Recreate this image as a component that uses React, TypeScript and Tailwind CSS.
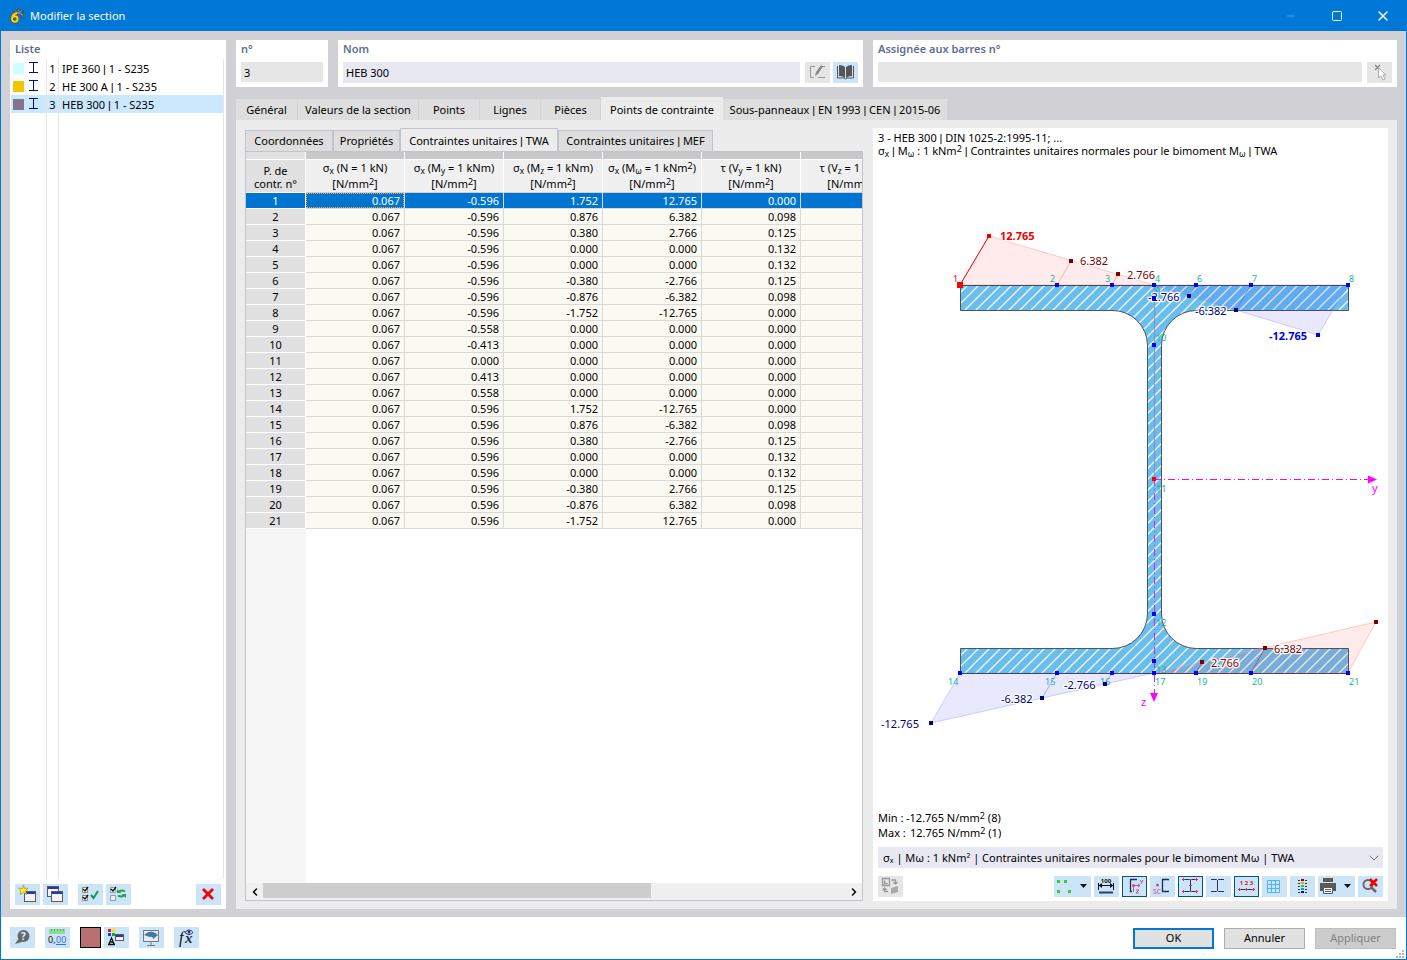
import { Fragment, useState, type ReactNode } from "react";
import { ChevronDown, ChevronLeft, ChevronRight, Minus, Square, X } from "lucide-react";
import clsx from "clsx";

const sections = [
  { id: 1, name: "IPE 360 | 1 - S235", color: "bg-[#ccffff]" },
  { id: 2, name: "HE 300 A | 1 - S235", color: "bg-[#f5c400]" },
  { id: 3, name: "HEB 300 | 1 - S235", color: "bg-[#85738f]" },
];

const mainTabs = [
  { label: "Général", width: "w-[62px]" },
  { label: "Valeurs de la section", width: "w-[121px]" },
  { label: "Points", width: "w-[61px]" },
  { label: "Lignes", width: "w-[61px]" },
  { label: "Pièces", width: "w-[60px]" },
  { label: "Points de contrainte", width: "w-[122px]" },
  { label: "Sous-panneaux | EN 1993 | CEN | 2015-06", width: "w-[225px]" },
];

const subTabs = [
  { label: "Coordonnées", width: "w-[88px]" },
  { label: "Propriétés", width: "w-[67px]" },
  { label: "Contraintes unitaires | TWA", width: "w-[158px]" },
  { label: "Contraintes unitaires | MEF", width: "w-[155px]" },
];

const columns: { symbol: string; axis: string; load: string; loadAxis: string; unit: ReactNode }[] = [
  { symbol: "σ", axis: "x", load: "N", loadAxis: "", unit: "kN" },
  { symbol: "σ", axis: "x", load: "M", loadAxis: "y", unit: "kNm" },
  { symbol: "σ", axis: "x", load: "M", loadAxis: "z", unit: "kNm" },
  { symbol: "σ", axis: "x", load: "M", loadAxis: "ω", unit: <>kNm<sup>2</sup></> },
  { symbol: "τ", axis: "", load: "V", loadAxis: "y", unit: "kN" },
  { symbol: "τ", axis: "", load: "V", loadAxis: "z", unit: "kN" },
];

const rows = [
  ["0.067", "-0.596", "1.752", "12.765", "0.000"],
  ["0.067", "-0.596", "0.876", "6.382", "0.098"],
  ["0.067", "-0.596", "0.380", "2.766", "0.125"],
  ["0.067", "-0.596", "0.000", "0.000", "0.132"],
  ["0.067", "-0.596", "0.000", "0.000", "0.132"],
  ["0.067", "-0.596", "-0.380", "-2.766", "0.125"],
  ["0.067", "-0.596", "-0.876", "-6.382", "0.098"],
  ["0.067", "-0.596", "-1.752", "-12.765", "0.000"],
  ["0.067", "-0.558", "0.000", "0.000", "0.000"],
  ["0.067", "-0.413", "0.000", "0.000", "0.000"],
  ["0.067", "0.000", "0.000", "0.000", "0.000"],
  ["0.067", "0.413", "0.000", "0.000", "0.000"],
  ["0.067", "0.558", "0.000", "0.000", "0.000"],
  ["0.067", "0.596", "1.752", "-12.765", "0.000"],
  ["0.067", "0.596", "0.876", "-6.382", "0.098"],
  ["0.067", "0.596", "0.380", "-2.766", "0.125"],
  ["0.067", "0.596", "0.000", "0.000", "0.132"],
  ["0.067", "0.596", "0.000", "0.000", "0.132"],
  ["0.067", "0.596", "-0.380", "2.766", "0.125"],
  ["0.067", "0.596", "-0.876", "6.382", "0.098"],
  ["0.067", "0.596", "-1.752", "12.765", "0.000"],
];

// Noto's bar is very wide, Liberation's sits closer to the words
function Bar() {
  return <span className="font-['Liberation_Sans',sans-serif] leading-0">|</span>;
}

function Piped({ text }: { text: string }) {
  return (
    <>
      {text.split("|").map((part, i) => (
        <Fragment key={i}>
          {i > 0 && <Bar />}
          {part}
        </Fragment>
      ))}
    </>
  );
}

function IconButton({
  label,
  children,
  tone = "bg-[#cce4f7]",
  width = "w-[25px]",
  active = false,
  disabled = false,
}: {
  label: string;
  children: ReactNode;
  tone?: string;
  width?: string;
  active?: boolean;
  disabled?: boolean;
}) {
  return (
    <button
      type="button"
      aria-label={label}
      disabled={disabled}
      className={clsx(
        "flex h-[21px] shrink-0 items-center justify-center",
        width,
        disabled ? "bg-[#e6e6e6]" : tone,
        active && "outline outline-1 -outline-offset-1 outline-[#005499]"
      )}
    >
      {children}
    </button>
  );
}

function Glyph({ children, wide = false }: { children: ReactNode; wide?: boolean }) {
  return (
    <svg
      viewBox={wide ? "0 0 37 21" : "0 0 25 21"}
      className={clsx("h-[21px] shrink-0", wide ? "w-[37px]" : "w-[25px]")}
      fill="none"
      aria-hidden="true"
    >
      {children}
    </svg>
  );
}

function AppLogo() {
  return (
    <svg viewBox="0 0 16 16" className="h-4 w-4" aria-hidden="true">
      <path d="M4 4 8 0.500l5 1L16 5l-2.500 6L9 6z" fill="#3b5672" />
      <path d="M6 3l8 4M9 1.500l5 7M13 2 9 6" stroke="#8aa6c0" strokeWidth="0.700" />
      <path d="M8.500 5C5 5.500 3 8 3 11a2.800 2.800 0 1 0 2.800-2.800Q4 8.200 3.200 10" fill="none" stroke="#6b5200" strokeWidth="3.400" />
      <path d="M8.500 5C5 5.500 3 8 3 11a2.800 2.800 0 1 0 2.800-2.800Q4 8.200 3.200 10" fill="none" stroke="#ffd21f" strokeWidth="2" />
    </svg>
  );
}

function BeamIcon() {
  return (
    <svg viewBox="0 0 11 12" className="h-3 w-[11px]" aria-hidden="true">
      <path d="M1 0.500h9M1 10.500h9M5.500 0.500v10" stroke="#00107f" fill="none" />
    </svg>
  );
}

function WindowShape({ x, y, w, h }: { x: number; y: number; w: number; h: number }) {
  return (
    <g>
      <rect x={x + 0.5} y={y + 0.5} width={w - 1} height={h - 1} fill="#f4f4f4" stroke="#5a5a5a" />
      <rect x={x + 1} y={y + 1} width={w - 2} height="2" fill="#2136c4" />
    </g>
  );
}

function SectionList() {
  const [selected, setSelected] = useState(3);
  return (
    <aside className="flex w-[216px] shrink-0 flex-col bg-white px-px pb-1">
      <h2 className="h-[19px] px-1 text-[11px] leading-[18px] font-semibold text-[#5f6d8f]">Liste</h2>
      <ul className="mr-px">
        {sections.map((s) => (
          <li key={s.id}>
            <button
              type="button"
              onClick={() => setSelected(s.id)}
              className={clsx(
                "flex h-[18px] w-full items-stretch border-r border-[#e5e5e5] text-left leading-5",
                s.id === selected && "bg-[#cce8ff]"
              )}
            >
              <span className="flex w-9 items-center gap-1 border-r border-[#e5e5e5] pl-[2px]">
                <span className={clsx("h-[11px] w-[11px]", s.color)} />
                <BeamIcon />
              </span>
              <span className="w-3 border-r border-[#e5e5e5] text-center">{s.id}</span>
              <span className="flex-1 pl-[3px]">
                <Piped text={s.name} />
              </span>
            </button>
          </li>
        ))}
      </ul>
      <div className="mr-px mb-[5px] flex flex-1 border-r border-[#e5e5e5]">
        <div className="w-9 border-r border-[#e5e5e5]" />
        <div className="w-3 border-r border-[#e5e5e5]" />
      </div>
      <div className="flex px-1">
        <div className="flex gap-[3px]">
          <IconButton label="Nouvelle section">
            <Glyph>
              <WindowShape x={9} y={7} w={12} h={11} />
              <path d="m8.500 1 1 3.500L13 4l-2.500 3 1.500 3.500-3.500-2-3.500 2L6 7 3.500 4l4 .5z" fill="#ffe92e" stroke="#9a8600" strokeWidth="0.600" />
            </Glyph>
          </IconButton>
          <IconButton label="Copier la section">
            <Glyph>
              <WindowShape x={4} y={2} w={12} h={11} />
              <WindowShape x={8} y={7} w={12} h={11} />
            </Glyph>
          </IconButton>
        </div>
        <div className="ml-[10px] flex gap-[3px]">
          <IconButton label="Tout sélectionner">
            <Glyph>
              <path d="M4.500 3.500h5v5h-5zM4.500 11.500h5v5h-5z" stroke="#888" fill="#fff" />
              <path d="m5 5 2 2 3-4M5 13l2 2 3-4" stroke="#111" strokeWidth="1.300" />
              <path d="m13 11 2.500 3L20 7" stroke="#0e9f4a" strokeWidth="2" />
            </Glyph>
          </IconButton>
          <IconButton label="Inverser la sélection">
            <Glyph>
              <path d="M4.500 3.500h5v5h-5zM4.500 11.500h5v5h-5z" stroke="#999" fill="#e5f0fa" />
              <path d="m5 5 2 2 3-4" stroke="#111" strokeWidth="1.300" />
              <path d="M19 7.500q-3-2-6 0M12 11.500q3 2 6 0" stroke="#20a050" strokeWidth="1.800" />
              <path d="M11 5v4h4.500zM20 14v-4h-4.500z" fill="#20a050" />
            </Glyph>
          </IconButton>
        </div>
        <div className="ml-auto flex">
          <IconButton label="Supprimer">
            <Glyph>
              <path d="m7 5 10 10M17 5 7 15" stroke="#f40000" strokeWidth="2.800" />
            </Glyph>
          </IconButton>
        </div>
      </div>
    </aside>
  );
}

function Field({ title, id, children, className }: { title: string; id: string; children: ReactNode; className?: string }) {
  return (
    <div className={clsx("h-[47px] bg-white px-[5px]", className)}>
      <label htmlFor={id} className="block h-[22px] text-[11px] leading-[18px] font-semibold text-[#5f6d8f]">
        {title}
      </label>
      <div className="flex">{children}</div>
    </div>
  );
}

function StressTable() {
  const cell = "border-r border-b border-[#d9d9d9] p-0";
  return (
    <div className="flex min-h-0 flex-1 flex-col border border-[#c3c3cf] bg-white">
      <div className="overflow-hidden">
        <table className="w-[654px] table-fixed border-separate border-spacing-0 leading-[15px]">
          <colgroup>
            <col className="w-[60px]" />
            {columns.map((_, i) => (
              <col key={i} className="w-[99px]" />
            ))}
          </colgroup>
          <thead>
            <tr className="h-2">
              <td className="border-r border-b border-white bg-[#e1e1e1] p-0" />
              {columns.map((_, i) => (
                <td key={i} className="border-r border-b border-white bg-[#c8c8c8] p-0" />
              ))}
            </tr>
            <tr className="h-8">
              <th className="border-r border-b border-white bg-[#e1e1e1] p-0 pt-px leading-[13px] font-normal">
                P. de
                <br />
                contr. n°
              </th>
              {columns.map((c, i) => (
                <th key={i} className="border-r border-b border-[#d0d0d0] border-r-white bg-[#f0f0f0] p-0 leading-4 font-normal whitespace-nowrap">
                  {c.symbol}
                  <sub>{c.axis}</sub> ({c.load}
                  <sub>{c.loadAxis}</sub> = 1 {c.unit})
                  <br />
                  [N/mm<sup>2</sup>]
                </th>
              ))}
            </tr>
          </thead>
          <tbody>
            {rows.map((values, r) => (
              <tr key={r} className={clsx("h-4", r === 0 ? "bg-[#0074d1] text-white" : "bg-[#fafaf3]")}>
                <th scope="row" className={clsx("border-r border-b border-white p-0 font-normal", r > 0 && "bg-[#e1e1e1]")}>
                  {r + 1}
                </th>
                {values.map((v, i) => (
                  <td key={i} className={clsx(cell, "text-right")}>
                    <span
                      className={clsx(
                        "block pr-1",
                        r === 0 && i === 0 && "outline-1 -outline-offset-1 outline-dotted outline-[#ff9a4a]"
                      )}
                    >
                      {v}
                    </span>
                  </td>
                ))}
                <td className={cell} />
              </tr>
            ))}
          </tbody>
        </table>
      </div>
      <div className="flex-1">
        <div className="h-full w-[60px] bg-[#f6f6f6]" />
      </div>
      <div className="flex h-[17px] bg-[#f0f0f0]">
        <button type="button" aria-label="Défiler à gauche" className="flex w-[17px] items-center justify-center">
          <ChevronLeft className="h-3 w-3" strokeWidth={3} />
        </button>
        <div className="flex-1">
          <div className="h-[15px] w-2/3 bg-[#cdcdcd]" />
        </div>
        <button type="button" aria-label="Défiler à droite" className="flex w-[17px] items-center justify-center">
          <ChevronRight className="h-3 w-3" strokeWidth={3} />
        </button>
      </div>
    </div>
  );
}

const nodes: [string, number, number, number, number][] = [
  ["2", 184, 125, 177, 122],
  ["3", 239, 125, 232, 122],
  ["4", 281, 125, 282, 122],
  ["6", 323, 125, 324, 122],
  ["7", 378, 125, 379, 122],
  ["8", 475, 125, 476, 122],
  ["9", 281, 138, 282, 134],
  ["10", 281, 185, 283, 181],
  ["12", 281, 454, 283, 466],
  ["13", 281, 501, 283, 513],
  ["14", 87, 513, 75, 525],
  ["15", 184, 513, 172, 525],
  ["16", 239, 513, 227, 525],
  ["17", 281, 513, 282, 525],
  ["19", 323, 513, 324, 525],
  ["20", 378, 513, 379, 525],
  ["21", 475, 513, 476, 525],
];

// value, marker x/y, label x/y, colour, bold
const stresses: [string, number, number, number, number, string, boolean][] = [
  ["12.765", 116, 76, 127, 80, "#f00000", true],
  ["6.382", 198, 101, 207, 105, "#7b0000", false],
  ["2.766", 245, 114, 254, 119, "#7b0000", false],
  ["-2.766", 316, 136, 275, 141, "#00007b", false],
  ["-6.382", 363, 150, 322, 155, "#00007b", false],
  ["-12.765", 445, 175, 396, 180, "#0000e6", true],
  ["-12.765", 58, 563, 8, 568, "#00007b", false],
  ["-6.382", 169, 538, 128, 543, "#00007b", false],
  ["-2.766", 232, 524, 191, 529, "#00007b", false],
  ["2.766", 329, 502, 338, 507, "#7b0000", false],
  ["6.382", 392, 488, 401, 493, "#7b0000", false],
  ["", 503, 462, 503, 462, "#7b0000", false],
];

const profile =
  "M87.500 125.500H475.500V150.500H323A35 35 0 0 0 288.500 185V454A35 35 0 0 0 323 488.500H475.500V513.500H87.500V488.500H239A35 35 0 0 0 274.500 454V185A35 35 0 0 0 239 150.500H87.500Z";

function SectionDrawing() {
  return (
    <svg viewBox="0 0 515 650" className="h-0 min-h-[480px] w-full flex-1" role="img" aria-label="HEB 300">
      <defs>
        <pattern id="hatch" width="11" height="11" patternUnits="userSpaceOnUse">
          <rect width="11" height="11" fill="#6bbdeb" />
          <path d="M-1 12 12 -1M-1 1 1 -1M10 12l2-2" stroke="#f0faff" strokeWidth="1.300" />
        </pattern>
      </defs>

      <path d={profile} fill="url(#hatch)" stroke="#4a5560" />

      <path d="M87 125 116 76 281 125Z" fill="#ff0000" fillOpacity="0.08" stroke="#ff9a9a" strokeOpacity="0.5" />
      <path d="M198 101 184 125M245 114 239 125" stroke="#ffb0b0" />
      <path d="M87 125 116 76" stroke="#ff0000" />
      <path d="M281 125 445 175 475 125Z" fill="#0000ff" fillOpacity="0.09" stroke="#8080ff" strokeOpacity="0.35" />
      <path d="M316 136 323 125M363 150 378 125" stroke="#5a74e0" strokeOpacity="0.7" />
      <path d="M87 513 58 563 281 513Z" fill="#0000ff" fillOpacity="0.09" stroke="#8080ff" strokeOpacity="0.35" />
      <path d="M169 538 184 513M232 524 239 513" stroke="#8f8fff" strokeOpacity="0.7" />
      <path d="M281 513 503 462 475 513Z" fill="#ff0000" fillOpacity="0.08" stroke="#ff9a9a" strokeOpacity="0.5" />
      <path d="M329 502 323 513M392 488 378 513" stroke="#a05070" strokeOpacity="0.8" />
      <path d="M281.500 125V319" stroke="#8a86a8" strokeOpacity="0.8" />
      <path d="M87 125.500H475M87 513.500H475" stroke="#46435f" />

      <path d="M281 319.500H496" stroke="#ff00ff" strokeDasharray="7 3 1 3" />
      <path d="M281.500 319V535" stroke="#e020e8" strokeDasharray="7 3 1 3" />
      <path d="M495 315.500 504 319.500 495 323.500ZM277 533H285L281 542Z" fill="#ff00ff" />
      <text x="499" y="332" fontSize="11" fill="#ff00ff">y</text>
      <text x="268" y="546" fontSize="11" fill="#ff00ff">z</text>

      <g fontSize="9">
        <text x="80" y="122" fill="#f00000">1</text>
        <text x="283" y="332" fill="#20a89a">11</text>
        {nodes.map(([label, , , x, y]) => (
          <text key={label} x={x} y={y} fill="#20b2a0">
            {label}
          </text>
        ))}
      </g>
      <g fontSize="11" stroke="#ffffff" strokeWidth="2.500" strokeLinejoin="round" paintOrder="stroke">
        {stresses.map(([label, , , x, y, color, bold], i) => (
          <text key={i} x={x} y={y} fill={color} fontWeight={bold ? 700 : 400}>
            {label}
          </text>
        ))}
      </g>
      {nodes.map(([label, x, y]) => (
        <rect key={label} x={x - 2} y={y - 2} width="4" height="4" fill="#0000ff" />
      ))}
      {stresses.map(([, x, y, , , color], i) => (
        <rect key={i} x={x - 2} y={y - 2} width="4" height="4" fill={color} />
      ))}
      <rect x="84" y="122" width="6" height="6" fill="#ff0000" />
      <rect x="279" y="317" width="4" height="4" fill="#ff0000" />
    </svg>
  );
}

function GraphToolbar() {
  return (
    <div className="mt-2 mb-1 flex gap-[3px]">
      <IconButton label="Échanger la vue" disabled>
        <Glyph>
          <path d="M4.500 2.500h7v7h-7zM6.500 4.500v3h3" stroke="#999" strokeWidth="1.300" />
          <path d="M13.500 4h4v4m-2-2 2 2 2-2M10 15.500H6.500V12m-2 2 2-2 2 2" stroke="#999" strokeWidth="1.300" />
          <path d="m13 12 7-2v6l-7 2z" fill="#aaa" />
        </Glyph>
      </IconButton>
      <div className="ml-auto flex gap-[3px]">
        <IconButton label="Points de contrainte" width="w-[37px]">
          <Glyph wide>
            <path d="M3 4h3v3H3zM10 4h3v3h-3zM3 14h3v3H3zM14 14h3v3h-3z" fill="#35cc35" />
            <path d="M26 8h7l-3.500 4z" fill="#111" />
          </Glyph>
        </IconButton>
        <IconButton label="Cotes">
          <Glyph>
            <path d="M4.500 7v7M19.500 7v7M4 9.500h16" stroke="#111" />
            <path d="M8 7 4.500 9.500 8 12zM16 7l3.500 2.500L16 12z" fill="#111" />
            <path d="M5 16.500h14" stroke="#2a3a70" strokeWidth="2" />
            <text x="12" y="7" fontSize="6" fontWeight="700" textAnchor="middle" fill="#111">100</text>
          </Glyph>
        </IconButton>
        <IconButton label="Axes principaux" active>
          <Glyph>
            <path d="M15 3.500H8.500v12H10" stroke="#1e2a5a" strokeWidth="1.300" />
            <path d="M11.500 16V9.500H18M16 8l2 1.500L16 11M18 4l1.500 2M21 4l-2 4" stroke="#c9508f" />
            <path d="M14 14h3l-3 3h3" stroke="#c9508f" />
            <circle cx="11.500" cy="9.500" r="1.500" fill="#c9508f" />
          </Glyph>
        </IconButton>
        <IconButton label="Centre de cisaillement">
          <Glyph>
            <path d="M19 3.500h-6.500v12H19" stroke="#1e2a5a" strokeWidth="1.300" />
            <circle cx="7.500" cy="9" r="1.500" fill="#c9508f" />
            <text x="3" y="18" fontSize="7" fill="#c9508f">SC</text>
          </Glyph>
        </IconButton>
        <IconButton label="Contour" active>
          <Glyph>
            <path d="M5 3.500h14M5 15.500h14M12.500 3.500v12" stroke="#24345e" />
            <path d="M4 3h3v1H4zM5 2h1v3H5zM18 2h1v3h-1zM17 3h3v1h-3zM11 3h3v1h-3zM11 9h3v1h-3zM4 15h3v1H4zM5 14h1v3H5zM11 15h3v1h-3zM18 14h1v3h-1zM17 15h3v1h-3z" fill="#e03040" />
          </Glyph>
        </IconButton>
        <IconButton label="Lignes de section">
          <Glyph>
            <path d="M5 3.500h5.500l1 1 1-1H18M5 15.500h5.500l1-1 1 1H18M11.500 4v11" stroke="#24345e" />
          </Glyph>
        </IconButton>
        <IconButton label="Numérotation" active>
          <Glyph>
            <path d="M5 13.500h15" stroke="#24345e" />
            <path d="M4 13h3v1H4zM5 12h1v3H5zM11 13h3v1h-3zM12 12h1v3h-1zM18 13h3v1h-3zM19 12h1v3h-1z" fill="#e03040" />
            <text x="12.500" y="9" fontSize="6" fontWeight="700" textAnchor="middle" fill="#e01020">1 2 3</text>
          </Glyph>
        </IconButton>
        <IconButton label="Grille">
          <Glyph>
            <path d="M5.500 4.500h12v12h-12zM9.500 4v13M13.500 4v13M5 8.500h13M5 12.500h13" stroke="#4db4f5" />
          </Glyph>
        </IconButton>
        <IconButton label="Légende des couleurs">
          <Glyph>
            <path d="M8 4.500h2M8 7.500h2M8 10.500h2M8 13.500h2M8 16.500h2M15 4.500h2M15 7.500h2M15 10.500h2M15 13.500h2M15 16.500h2" stroke="#333" />
            <path d="M11 3h3v2h-3z" fill="#a00000" />
            <path d="M11 6h3v2h-3z" fill="#f5a000" />
            <path d="M11 9h3v2h-3z" fill="#20d020" />
            <path d="M11 12h3v2h-3z" fill="#00a0e0" />
            <path d="M11 15h3v2h-3z" fill="#0000c0" />
          </Glyph>
        </IconButton>
        <IconButton label="Imprimer" width="w-[37px]">
          <Glyph wide>
            <path d="M5 2h10v4H5zM2 7h16v8H2z" fill="#595959" />
            <path d="M5.500 11.500h9v6h-9z" fill="#fff" stroke="#595959" />
            <path d="M7 13.500h6M7 15.500h6" stroke="#595959" />
            <path d="M26 8h7l-3.500 4z" fill="#111" />
          </Glyph>
        </IconButton>
        <IconButton label="Réinitialiser le zoom">
          <Glyph>
            <circle cx="10" cy="8.500" r="4.500" stroke="#6a6a6a" strokeWidth="2" />
            <path d="m13 11 5 5" stroke="#6a6a6a" strokeWidth="2.500" />
            <path d="m12 3 7 7M19 3l-7 7" stroke="#f00000" strokeWidth="2.500" />
          </Glyph>
        </IconButton>
      </div>
    </div>
  );
}

function GraphPanel() {
  return (
    <section className="flex min-w-0 flex-col bg-white">
      <div className="px-[5px] pt-[3px] pb-[3px] leading-[13px]">
        <p>
          <Piped text="3 - HEB 300 | DIN 1025-2:1995-11; ..." />
        </p>
        <p>
          σ<sub>x</sub> <Bar /> M<sub>ω</sub> : 1 kNm<sup>2</sup> <Bar /> Contraintes unitaires normales pour le bimoment M
          <sub>ω</sub> <Bar /> TWA
        </p>
      </div>
      <SectionDrawing />
      <div className="px-[5px]">
        <dl className="grid grid-cols-[28px_1fr] leading-[15px]">
          <dt>Min :</dt>
          <dd>-12.765 N/mm<sup>2</sup> (8)</dd>
          <dt>Max :</dt>
          <dd className="pl-1">12.765 N/mm<sup>2</sup> (1)</dd>
        </dl>
        <div className="mt-[7px] grid items-center">
          <select
            aria-label="Contrainte affichée"
            className="col-start-1 row-start-1 h-[21px] w-full appearance-none rounded-none bg-[#e8e8f3] px-[5px] pt-px"
          >
            <option>σₓ | Mω : 1 kNm² | Contraintes unitaires normales pour le bimoment Mω | TWA</option>
          </select>
          <ChevronDown className="pointer-events-none col-start-1 row-start-1 mr-px h-4 w-4 justify-self-end text-[#444]" strokeWidth={1} />
        </div>
        <GraphToolbar />
      </div>
    </section>
  );
}

function Footer() {
  const action = "h-[21px] w-[81px] border";
  return (
    <footer className="flex h-[42px] items-start gap-[10px] bg-white px-[9px] pt-[10px]">
      <IconButton label="Aide">
        <Glyph>
          <circle cx="13.500" cy="9" r="6" fill="#626a70" />
          <path d="m9 11-4 6 7-2z" fill="#626a70" />
          <text x="13.500" y="13" fontSize="10" fontWeight="700" textAnchor="middle" fill="#e4edf4">?</text>
        </Glyph>
      </IconButton>
      <IconButton label="Unités et décimales">
        <Glyph>
          <path d="M4 2h16v5H4z" fill="#8fdc8f" />
          <path d="M6.500 2v2M9.500 2v2M12.500 2v2M15.500 2v2M18.500 2v2" stroke="#509050" strokeWidth="0.700" />
          <text x="3" y="16" fontSize="9" fill="#111">0,</text>
          <text x="11" y="16" fontSize="9" fill="#3a6fe0">00</text>
          <path d="M11 17.500h10" stroke="#3a6fe0" />
        </Glyph>
      </IconButton>
      <div className="flex gap-[3px]">
        <button type="button" aria-label="Couleur" className="h-[21px] w-[21px] border border-black bg-[#b87070]" />
        <IconButton label="Affichage">
          <Glyph>
            <path d="M4 2h3v3H4z" fill="#e02020" />
            <path d="M8 2h3v3H8z" fill="#f5e000" />
            <path d="M4 6h3v3H4z" fill="#2040e0" />
            <path d="M8 6h3v3H8z" fill="#20a030" />
            <path d="m5 17 2.500-6 2.500 6M6 15h3M4 17.500h7" stroke="#111" strokeWidth="1.300" />
            <WindowShape x={11} y={7} w={9} h={7} />
          </Glyph>
        </IconButton>
      </div>
      <IconButton label="Vue">
        <Glyph>
          <path d="M4.500 3.500h15v11h-15z" fill="#e2eef8" stroke="#777" />
          <path d="M12 15v3M8 18.500h8" stroke="#777" />
          <path d="M5 8q7-7 14 0l-5 4q0-3-3-2z" fill="#47779d" />
        </Glyph>
      </IconButton>
      <IconButton label="Formules">
        <Glyph>
          <text x="5" y="16" fontSize="16" fontStyle="italic" fontFamily="Liberation Serif, serif" fill="#111">f</text>
          <text x="11" y="16" fontSize="15" fontStyle="italic" fontWeight="700" fontFamily="Liberation Serif, serif" fill="#24333f">x</text>
          <path d="M11 5.500q4-5 8 0-4 4-8 0z" fill="#fff" stroke="#202080" />
          <circle cx="15" cy="5" r="1.500" fill="#202080" />
        </Glyph>
      </IconButton>
      <div className="mt-px ml-auto flex gap-[10px]">
        <button type="button" className="h-[21px] w-[81px] border-2 border-[#0078d7] bg-[#e1e1e1]">
          OK
        </button>
        <button type="button" className={clsx(action, "border-[#adadad] bg-[#e1e1e1]")}>
          Annuler
        </button>
        <button type="button" disabled className={clsx(action, "border-[#bfbfbf] bg-[#cccccc] text-[#838383]")}>
          Appliquer
        </button>
      </div>
      <svg viewBox="0 0 9 9" className="-mr-2 -ml-[10px] h-[9px] w-[9px] self-end" aria-hidden="true">
        <path d="M6 0h2v2H6zM3 3h2v2H3zM6 3h2v2H6zM0 6h2v2H0zM3 6h2v2H3zM6 6h2v2H6z" fill="#b8b8b8" />
      </svg>
    </footer>
  );
}

export default function App() {
  const [tab, setTab] = useState("Points de contrainte");
  const [subTab, setSubTab] = useState("Contraintes unitaires | TWA");

  return (
    <div className="flex min-h-screen flex-col border border-[#0078d7] bg-[#d0d0d5] font-['Noto_Sans','Open_Sans',sans-serif] text-[11px] text-black [&_sup]:-top-[3px] [&_sup]:text-[9px]">
      <header className="flex h-[30px] items-center bg-[#0078d7] pl-2 text-white">
        <AppLogo />
        <h1 className="ml-[5px] text-[11px]">Modifier la section</h1>
        <div className="ml-auto flex">
          <button type="button" aria-label="Réduire" disabled className="flex h-[30px] w-[46px] items-center justify-center text-[#4a9fe3]">
            <Minus className="h-3 w-3" strokeWidth={2} />
          </button>
          <button type="button" aria-label="Agrandir" className="flex h-[30px] w-[46px] items-center justify-center">
            <Square className="h-3 w-3" strokeWidth={2} />
          </button>
          <button type="button" aria-label="Fermer" className="flex h-[30px] w-[46px] items-center justify-center">
            <X className="h-4 w-4" strokeWidth={2} />
          </button>
        </div>
      </header>

      <main className="flex flex-1 gap-[10px] px-[9px] pt-[9px] pb-2">
        <SectionList />
        <div className="flex min-w-0 flex-1 flex-col">
          <div className="grid grid-cols-[627fr_524fr] gap-[10px]">
            <div className="flex gap-[10px]">
              <Field title="n°" id="number" className="w-[92px]">
                <input id="number" readOnly defaultValue="3" className="h-5 w-full min-w-0 bg-[#e6e6e6] px-[3px]" />
              </Field>
              <Field title="Nom" id="name" className="flex-1">
                <input id="name" defaultValue="HEB 300" className="mr-[5px] h-[21px] min-w-0 flex-1 bg-[#e8e8f3] px-[3px]" />
                <div className="flex gap-[3px]">
                  <IconButton label="Modifier le nom" disabled>
                    <Glyph>
                      <path d="M10 4.500H5.500v11H9M13 15.500h7M17 4.500h3" stroke="#999" />
                      <path d="m10 14 1-4 5-7 2 1.500-5 7.500z" fill="#8a8a8a" />
                    </Glyph>
                  </IconButton>
                  <IconButton label="Bibliothèque">
                    <Glyph>
                      <path d="M6 3q4 0 6 2v11q-2-2-6-2zM19 3q-4 0-6 2v11q2-2 6-2z" fill="#555" />
                      <path d="M4.500 4v12H11l1.500 1 1.500-1h6.500V4" stroke="#555" />
                    </Glyph>
                  </IconButton>
                </div>
              </Field>
            </div>
            <Field title="Assignée aux barres n°" id="members">
              <input id="members" readOnly className="mr-[5px] h-5 min-w-0 flex-1 bg-[#e6e6e6] px-[3px]" />
              <IconButton label="Sélectionner les barres" disabled>
                <Glyph>
                  <path d="m8 3 5 5M13 3 8 8" stroke="#888" strokeWidth="1.300" />
                  <path d="M11.500 6v10l2.500-2 2 4 2-1-2-4h3z" fill="#fff" stroke="#aaa" />
                </Glyph>
              </IconButton>
            </Field>
          </div>

          <nav className="mt-[10px] flex h-[23px] items-end">
            {mainTabs.map((t) => (
              <button
                key={t.label}
                type="button"
                onClick={() => setTab(t.label)}
                className={clsx(
                  "shrink-0 whitespace-nowrap",
                  t.width,
                  t.label === tab ? "h-[23px] bg-[#ececec] pt-1" : "h-[21px] border-r border-[#d4d4d4] bg-[#dedede] pt-[2px]"
                )}
              >
                <Piped text={t.label} />
              </button>
            ))}
          </nav>

          <div className="grid flex-1 grid-cols-[627fr_524fr] gap-[10px] bg-[#ececec] pt-2 pb-2">
            <section className="flex min-w-0 flex-col pl-[9px]">
              <div className="flex h-[23px] items-end">
                {subTabs.map((t) => (
                  <button
                    key={t.label}
                    type="button"
                    onClick={() => setSubTab(t.label)}
                    className={clsx(
                      "shrink-0 border-t border-r border-l border-[#c3c3cf] whitespace-nowrap",
                      t.width,
                      t.label === subTab ? "h-[23px] bg-[#ececec] pt-[2px]" : "h-[21px] bg-[#dedede]"
                    )}
                  >
                    <Piped text={t.label} />
                  </button>
                ))}
              </div>
              <StressTable />
            </section>
            <div className="grid min-w-0 pr-[9px]">
              <GraphPanel />
            </div>
          </div>
        </div>
      </main>

      <Footer />
    </div>
  );
}
